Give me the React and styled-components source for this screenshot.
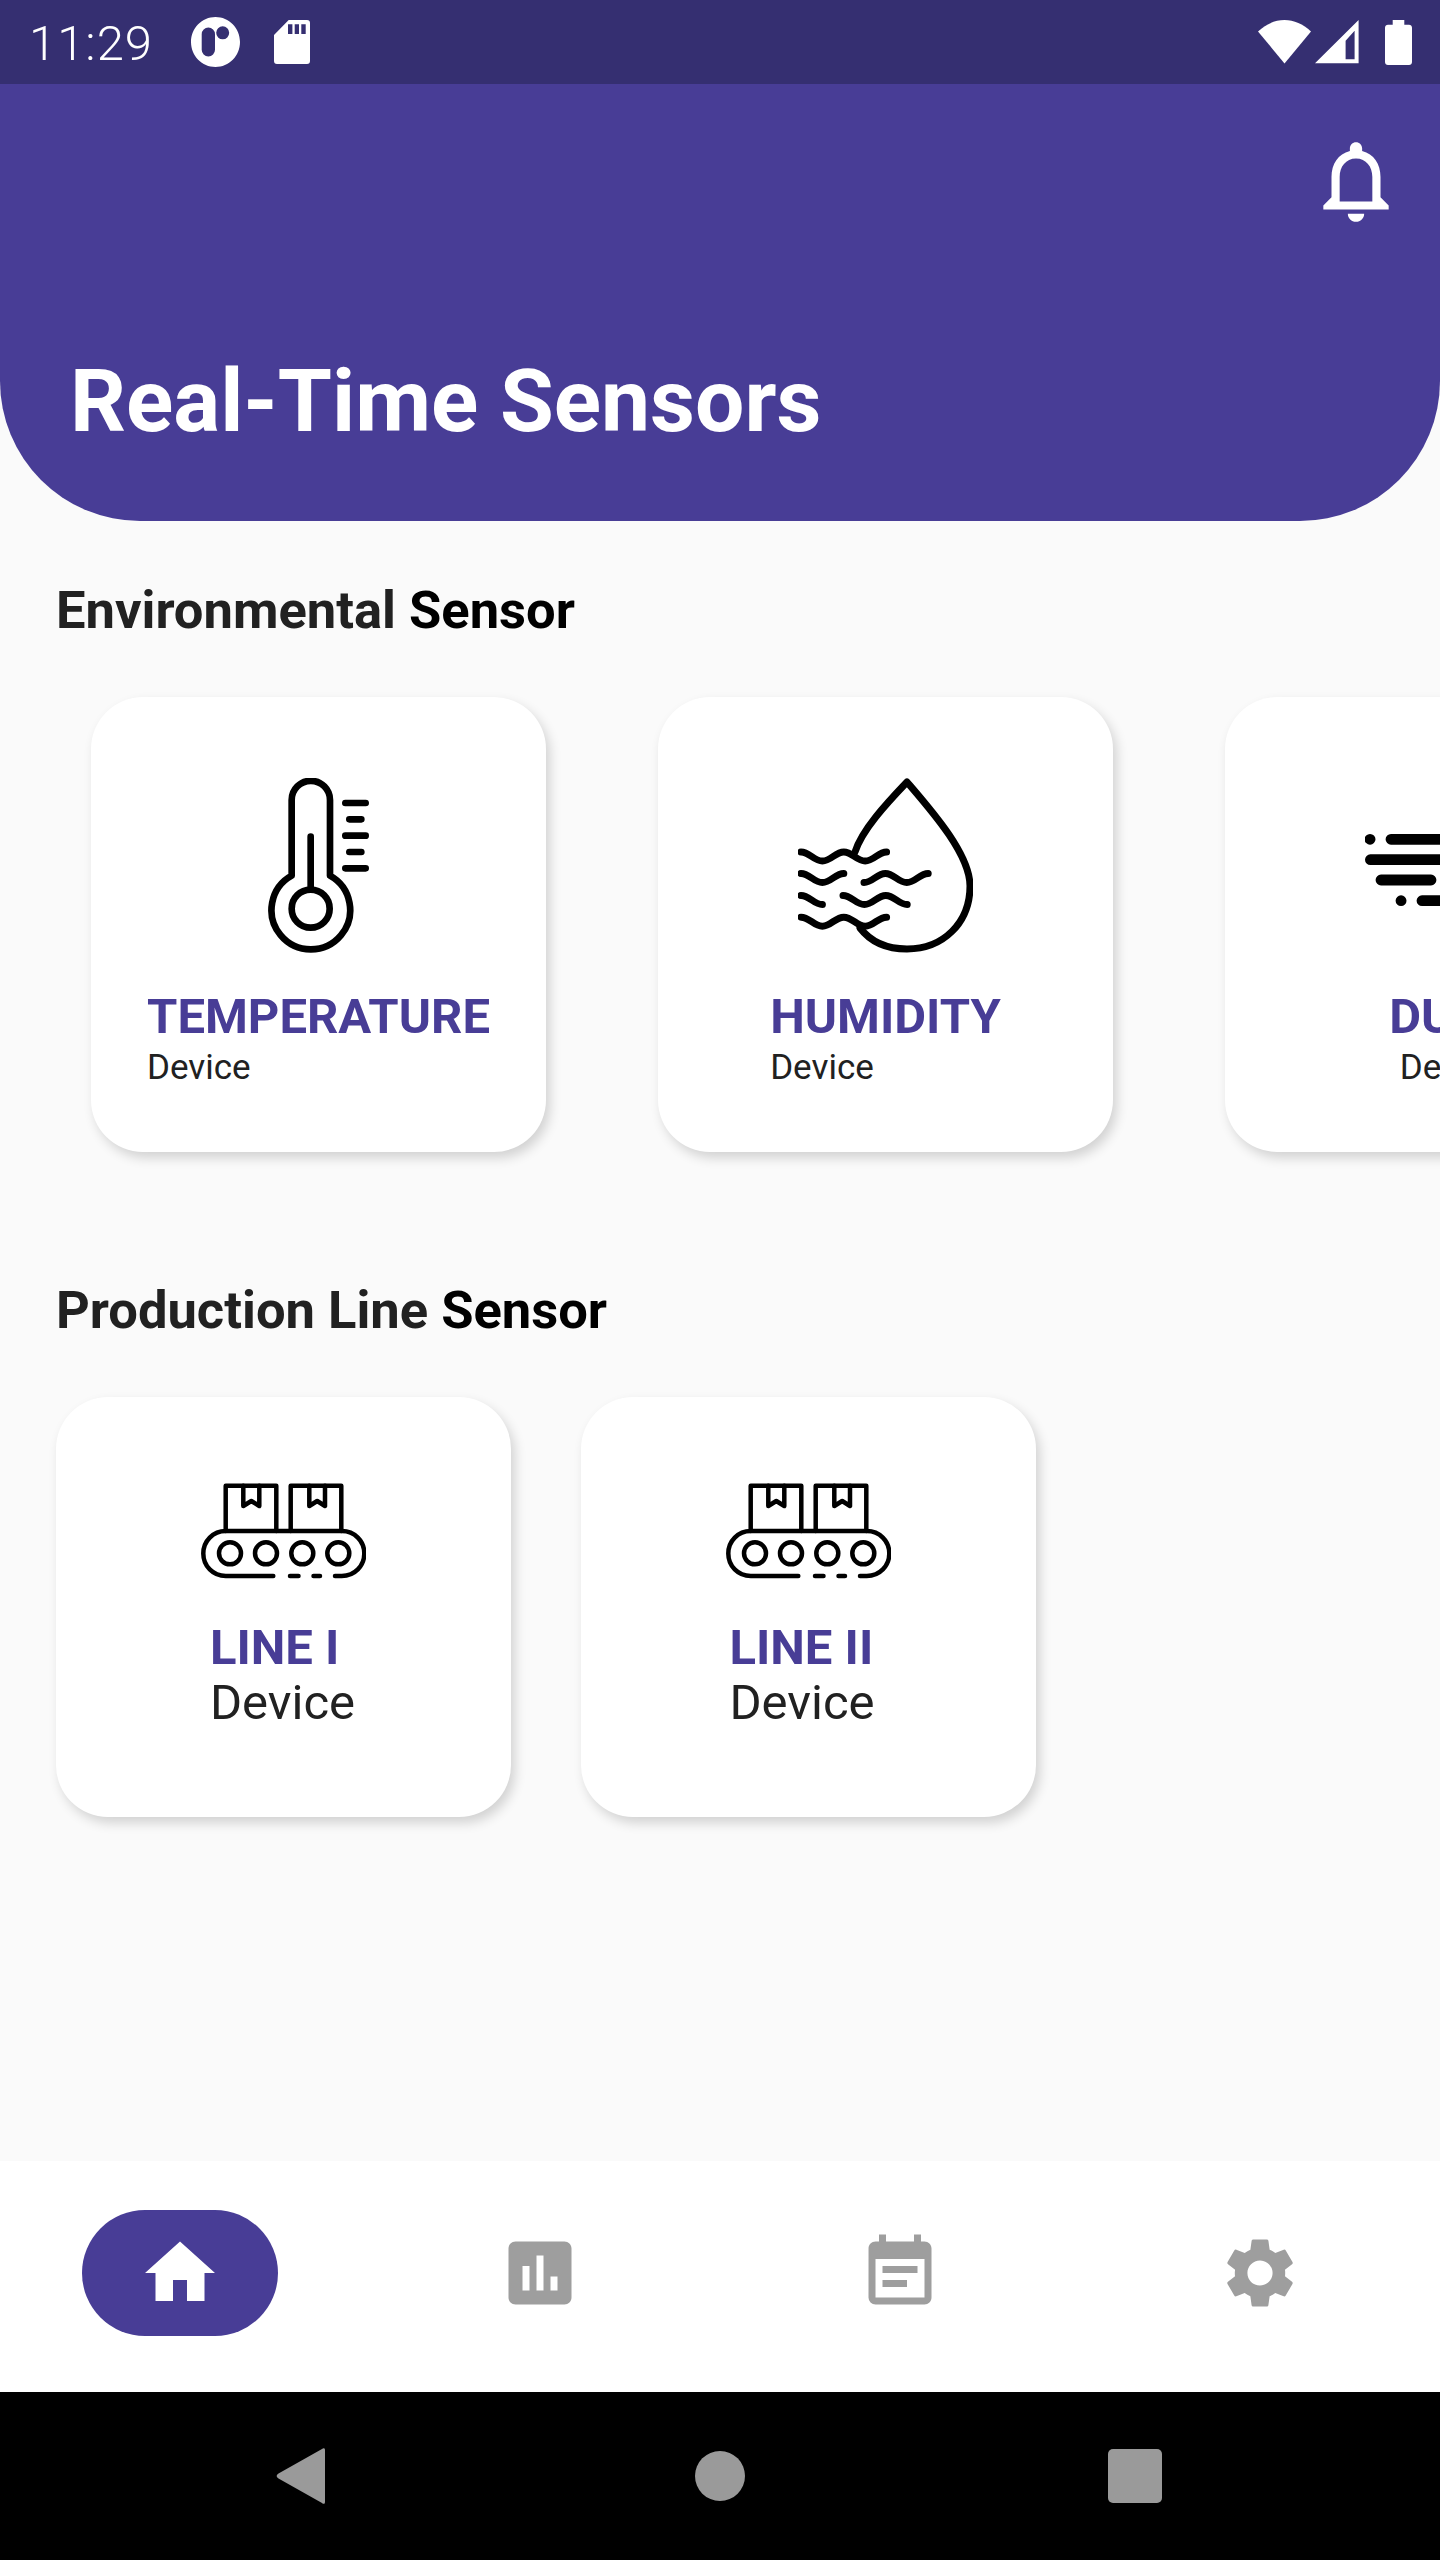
import React from "react";
import styled, { createGlobalStyle } from "styled-components";
import { MdHome, MdAssessment, MdEventNote, MdSettings, MdNotificationsNone } from "react-icons/md";

const Global = createGlobalStyle`
  html, body { margin: 0; padding: 0; background: #fafafa; }
  body { font-family: Roboto, "Liberation Sans", sans-serif; }
  * { box-sizing: border-box; }
`;

const Screen = styled.div`
  width: 1440px; height: 2560px; display: flex; flex-direction: column; overflow: hidden; background: #fafafa;
`;
const StatusBar = styled.div`
  height: 84px; flex: none; background: #352f71; color: #fff; display: flex; align-items: center; padding: 0 28px 0 29px;
`;
const Clock = styled.span`
  font-size: 49px; font-weight: 300; letter-spacing: 1px; width: 162px; line-height: 84px; padding-top: 4px;
`;
const StatusGroup = styled.div`
  display: flex; align-items: center; gap: ${p => p.$gap}px; margin-left: ${p => p.$auto ? "auto" : "0"};
`;
const StatusIcon = styled.svg`
  display: block; flex: none; fill: #fff; margin-left: ${p => p.$ml || 0}px;
`;
const Header = styled.header`
  height: 437px; flex: none; background: #483d96; border-radius: 0 0 140px 140px; display: flex; flex-direction: column; padding: 48px 35px 0 70px;
`;
const BellRow = styled.div`
  display: flex; justify-content: flex-end; height: 98px; color: #fff; font-size: 98px; line-height: 0;
`;
const Title = styled.h1`
  margin: 121px 0 0; font-size: 87.5px; line-height: 100px; font-weight: 700; color: #fff;
`;
const Body = styled.main`
  flex: 1; display: flex; flex-direction: column; min-height: 0;
`;
const SectionTitle = styled.h2`
  margin: ${p => p.$top}px 0 0 56px; font-size: 52.5px; line-height: 64px; font-weight: 700; color: #212121;
`;
const Emphasis = styled.span`
  color: #000;
`;
const Row = styled.div`
  display: flex; gap: ${p => p.$gap}px; margin-top: ${p => p.$top}px; padding-left: ${p => p.$left}px;
`;
const Card = styled.article`
  flex: none; width: 455px; height: ${p => p.$h}px; background: #fff; border-radius: 52px;
  box-shadow: 4px 6px 12px rgba(0,0,0,0.16); display: flex; flex-direction: column; align-items: center; overflow: hidden;
  padding-top: ${p => p.$pad}px;
`;
const IconSvg = styled.svg`
  width: ${p => p.$w || 175}px; height: ${p => p.$h || 175}px; flex: none; display: block; color: #000;
`;
const Labels = styled.div`
  display: flex; flex-direction: column; align-items: ${p => p.$center ? "center" : "flex-start"};
  margin-top: ${p => p.$top}px; padding-right: ${p => p.$shift || 0}px;
`;
const Name = styled.span`
  font-size: 49px; line-height: 58px; font-weight: 700; color: #483d96; white-space: nowrap;
`;
const Sub = styled.span`
  font-size: ${p => p.$size}px; line-height: ${p => p.$size + 6}px; font-weight: 400; color: #212121;
  margin-top: ${p => p.$mt}px;
`;
const BottomNav = styled.nav`
  height: 231px; flex: none; background: #fff; display: grid; grid-template-columns: repeat(4, 360px); align-items: center; justify-items: center; padding-bottom: 7px;
`;
const NavItem = styled.div`
  width: 196px; height: 126px; border-radius: 63px; background: ${p => p.$active ? "#483d96" : "transparent"};
  color: ${p => p.$active ? "#fff" : "#9e9e9e"}; display: flex; align-items: center; justify-content: center; font-size: 84px; line-height: 0;
`;
const SystemBar = styled.div`
  height: 168px; flex: none; background: #000; display: flex; align-items: center; padding: 0 0 0 276px; color: #9a9a9a;
`;
const SysButton = styled.svg`
  width: ${p => p.$w}px; height: 58px; margin-right: ${p => p.$mr}px; flex: none; display: block;
`;

const wave = (x, y, halves, startLow) => {
  const h = 4.5, s = 21.4;
  let up = startLow ? 1 : -1;
  let d = `M${x} ${y + up * h}`;
  let cx = x;
  for (let i = 0; i < halves; i++) {
    d += ` C${cx + s * 0.4} ${y + up * h} ${cx + s * 0.6} ${y - up * h} ${cx + s} ${y - up * h}`;
    cx += s; up = -up;
  }
  return d;
};

const Thermometer = () => (
  <IconSvg viewBox="513 294 525 525" fill="none" stroke="currentColor" strokeWidth="20" strokeLinecap="round" strokeLinejoin="round">
    <path d="M695 587V360A57.5 57.5 0 0 1 810 360V587A118 118 0 1 1 695 587Z" />
    <circle cx="752" cy="686" r="57" />
    <path d="M752 470V625" />
    <path d="M856 369H917M868 418H904M856 467H917M868 516H904M856 565H917" />
  </IconSvg>
);

const Droplet = () => (
  <IconSvg viewBox="0 0 175 175" fill="none" stroke="currentColor" strokeWidth="7" strokeLinecap="round" strokeLinejoin="round">
    <path d="M57 74C64 52 88 26 109 4C133 32 172 76 172 108C172 145 145 171 109 171C88 171 72 163 62 150" />
    <path d={wave(3, 78.5, 4) + wave(3, 100, 2) + wave(66, 100, 3, true) + wave(3, 122, 1) + wave(45, 122, 3) + wave(3, 143.7, 4)} />
  </IconSvg>
);

const Dust = () => (
  <IconSvg viewBox="0 0 175 175" fill="none" stroke="currentColor" strokeWidth="10.8" strokeLinecap="round">
    <path d="M5 61.300H5.100M26 61.300H175M5.400 81.700H175M16 102H66M36 122.700H36.100M57 122.700H175" />
  </IconSvg>
);

const Conveyor = () => (
  <IconSvg $w={165} $h={96} viewBox="0 0 165 96" fill="none" stroke="currentColor" strokeWidth="4.5" strokeLinecap="round" strokeLinejoin="round">
    <path d="M24.700 48V2.700H75.300V48M89.700 48V2.700H140.300V48" />
    <path d="M42.300 2.700V23L50.300 18L58.300 23V2.700M108.300 2.700V23L116.200 18L124 23V2.700" />
    <path d="M72.300 93H24.800C12 93 2.300 83 2.300 70.500C2.300 58 12 48 24.800 48H140.800C153.600 48 163.300 58 163.300 70.500C163.300 83 153.600 93 140.800 93H134" />
    <path d="M89 93H97.500M112.500 93H119" />
    <circle cx="29" cy="70.300" r="11" />
    <circle cx="65" cy="70.300" r="11" />
    <circle cx="101.300" cy="70.300" r="11" />
    <circle cx="137.300" cy="70.300" r="11" />
  </IconSvg>
);

export default function App() {
  return (
    <Screen>
      <Global />
      <StatusBar>
        <Clock>11:29</Clock>
        <StatusGroup $gap={34}>
          <StatusIcon width="49" height="50" viewBox="0 0 49 50">
            <path fillRule="evenodd" d="M24.500 0C38 0 49 11 49 25C49 39 38 50 24.500 50C11 50 0 39 0 25C0 11 11 0 24.500 0ZM10.700 17.200V32.800A6.650 6.650 0 0 0 24 32.800V17.200A6.650 6.650 0 0 0 10.700 17.200ZM31.700 9.300A6.500 6.500 0 1 0 31.700 22.300A6.500 6.500 0 1 0 31.700 9.300Z" />
          </StatusIcon>
          <StatusIcon width="36" height="44" viewBox="0 0 36 44">
            <path fillRule="evenodd" d="M14.700 0H33C35 0 36 1 36 3V41C36 43 35 44 33 44H3C1 44 0 43 0 41V15ZM14 4.300V14H18.400V4.300ZM20.700 4.300V14H25V4.300ZM27.300 4.300V14H31.700V4.300Z" />
          </StatusIcon>
        </StatusGroup>
        <StatusGroup $auto $gap={4}>
          <StatusIcon width="53" height="45" viewBox="0 0 53 45">
            <path d="M0 11.400C8 4 17 0 26.500 0C36 0 45 4 53 11.400L26.500 43.400Z" />
          </StatusIcon>
          <StatusIcon width="44" height="44" viewBox="0 0 44 44">
            <path fillRule="evenodd" d="M43.600 0V43.300H0ZM39.600 10.700L30.600 20.700V39.300H39.600Z" />
          </StatusIcon>
          <StatusIcon $ml={22} width="27" height="45" viewBox="0 0 27 45">
            <path d="M7.700 0H19.300V4.700H24C25.700 4.700 27 6 27 7.700V42C27 43.700 25.700 45 24 45H3C1.300 45 0 43.700 0 42V7.700C0 6 1.300 4.700 3 4.700H7.700Z" />
          </StatusIcon>
        </StatusGroup>
      </StatusBar>
      <Header>
        <BellRow><MdNotificationsNone /></BellRow>
        <Title>Real-Time Sensors</Title>
      </Header>
      <Body>
        <SectionTitle $top={57}>Environmental <Emphasis>Sensor</Emphasis></SectionTitle>
        <Row $top={55} $gap={112} $left={91}>
          <Card $h={455} $pad={81}>
            <Thermometer />
            <Labels $top={35}>
              <Name>TEMPERATURE</Name>
              <Sub $size={35} $mt={1}>Device</Sub>
            </Labels>
          </Card>
          <Card $h={455} $pad={81}>
            <Droplet />
            <Labels $top={35}>
              <Name>HUMIDITY</Name>
              <Sub $size={35} $mt={1}>Device</Sub>
            </Labels>
          </Card>
          <Card $h={455} $pad={81}>
            <Dust />
            <Labels $top={35} $center $shift={2}>
              <Name>DUST</Name>
              <Sub $size={35} $mt={1}>Device</Sub>
            </Labels>
          </Card>
        </Row>
        <SectionTitle $top={126}>Production Line <Emphasis>Sensor</Emphasis></SectionTitle>
        <Row $top={55} $gap={70} $left={56}>
          <Card $h={420} $pad={86}>
            <Conveyor />
            <Labels $top={40} $shift={2}>
              <Name>LINE I</Name>
              <Sub $size={49} $mt={-2}>Device</Sub>
            </Labels>
          </Card>
          <Card $h={420} $pad={86}>
            <Conveyor />
            <Labels $top={40} $shift={13}>
              <Name>LINE II</Name>
              <Sub $size={49} $mt={-2}>Device</Sub>
            </Labels>
          </Card>
        </Row>
      </Body>
      <BottomNav>
        <NavItem $active><MdHome /></NavItem>
        <NavItem><MdAssessment /></NavItem>
        <NavItem><MdEventNote /></NavItem>
        <NavItem><MdSettings /></NavItem>
      </BottomNav>
      <SystemBar>
        <SysButton $w={49} $mr={370} viewBox="0 0 49 58" fill="currentColor">
          <path d="M46 2C47.500 0.500 49 1 49 3V55C49 57 47.500 57.500 46 56L2.500 31.500C0 30 0 28 2.500 26.500Z" />
        </SysButton>
        <SysButton $w={50} $mr={363} viewBox="0 0 50 58" fill="currentColor">
          <circle cx="25" cy="29" r="25" />
        </SysButton>
        <SysButton $w={54} $mr={0} viewBox="0 0 54 58" fill="currentColor">
          <rect x="0" y="2" width="54" height="54" rx="5" />
        </SysButton>
      </SystemBar>
    </Screen>
  );
}
